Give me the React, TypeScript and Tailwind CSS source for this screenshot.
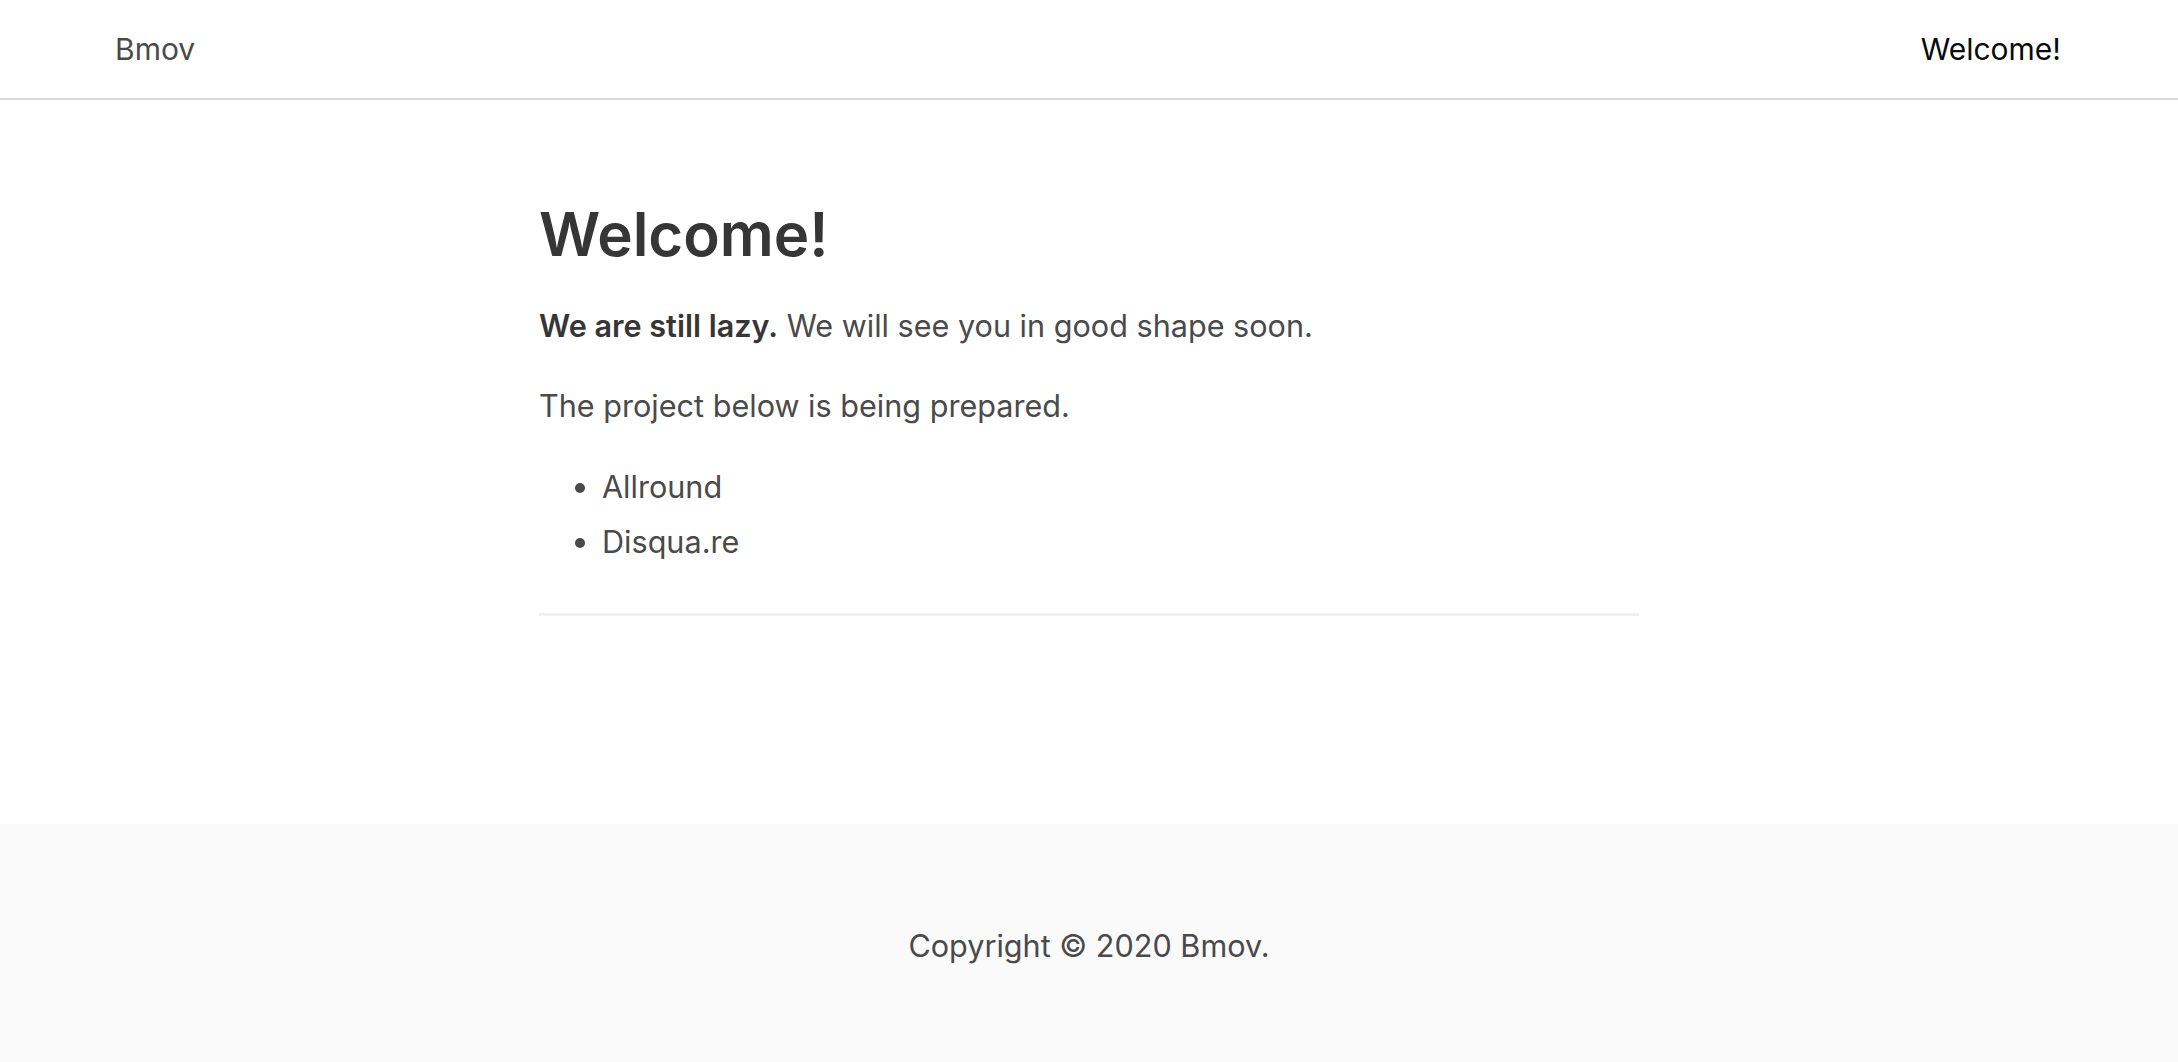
export default function App() {
  return (
    <div className="flex min-h-screen flex-col bg-white text-[#4a4a4a]" style={{ fontFamily: 'Inter, "Noto Sans", sans-serif' }}>
      <nav className="flex h-[100px] items-center justify-between border-b-2 border-[#dbdbdb] pl-[115px] pr-[117px] text-[30px]">
        <a className="text-[#4a4a4a]">Bmov</a>
        <a className="text-[#0a0a0a]">Welcome!</a>
      </nav>

      <main className="flex-1">
        <div className="mx-auto w-[1100px] pt-[101px]">
          <h1 className="mb-[34px] text-[60px] font-semibold leading-[1.125] text-[#363636]">Welcome!</h1>
          <p className="mb-[35px] text-[30.6px] leading-[45px]">
            <strong className="font-semibold text-[#363636]">We are still lazy.</strong> We will see you in good shape soon.
          </p>
          <p className="mb-[36px] text-[30.6px] leading-[45px]">The project below is being prepared.</p>
          <ul className="list-disc space-y-[10px] pl-[63px] text-[30.6px] leading-[45px] marker:text-[#4a4a4a]">
            <li>Allround</li>
            <li>Disqua.re</li>
          </ul>
          <hr className="mt-[49px] h-[3px] border-0 bg-[#f0f0f0]" />
        </div>
      </main>

      <footer className="h-[238px] bg-[#fafafa] pt-[99px] text-center text-[30.6px] leading-[45px]">
        <p>Copyright © 2020 Bmov.</p>
      </footer>
    </div>
  );
}
